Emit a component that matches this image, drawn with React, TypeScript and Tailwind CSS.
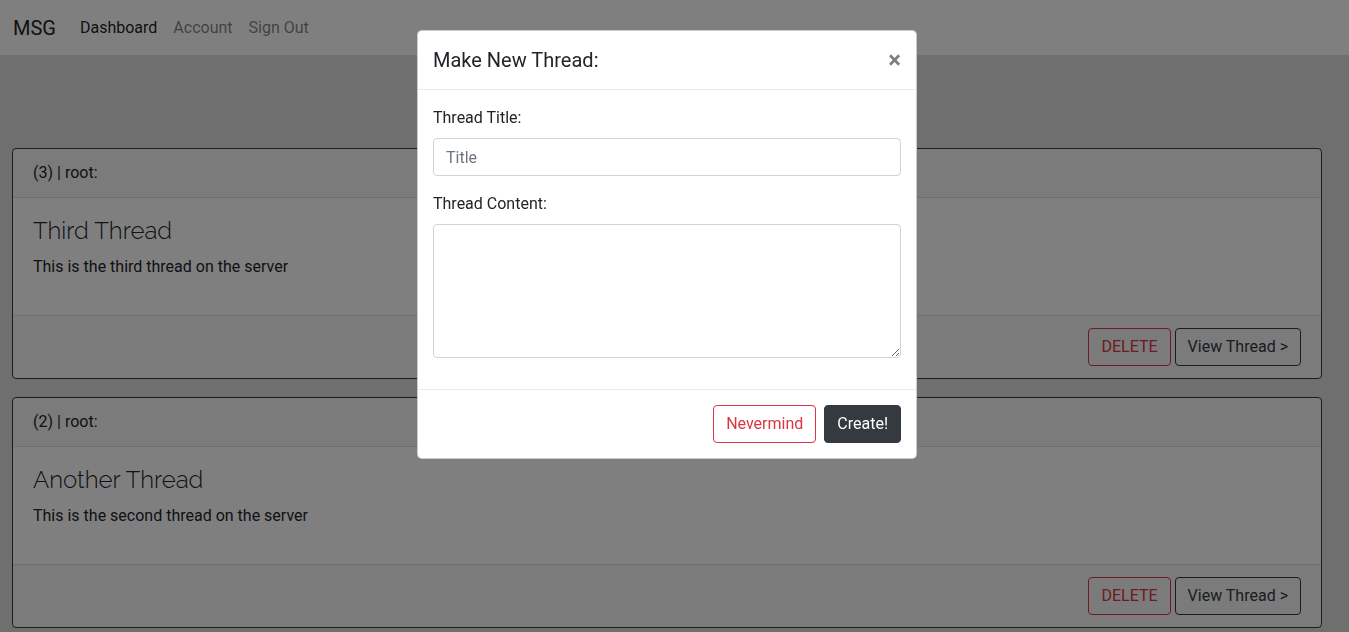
import React from 'react';

const threads = [
  { id: 3, author: 'root', title: 'Third Thread', content: 'This is the third thread on the server' },
  { id: 2, author: 'root', title: 'Another Thread', content: 'This is the second thread on the server' },
];

const btn = 'rounded-[4px] border px-3 py-[6px] text-base leading-6';

function ThreadCard({ thread }: { thread: (typeof threads)[number] }) {
  return (
    <div className="mb-[18px] rounded-[4px] border border-[#343a40] bg-white">
      <div className="border-b border-[#dcdcdc] bg-black/[0.03] px-5 py-3 leading-6">
        ({thread.id}) | {thread.author}:
      </div>
      <div className="px-5 pt-[19px] pb-5">
        <h4 className="mb-[9px] font-['Raleway','Lato',sans-serif] text-2xl leading-[1.2] font-light">
          {thread.title}
        </h4>
        <p className="mb-4 leading-6">{thread.content}</p>
      </div>
      <div className="flex justify-end gap-1 border-t border-[#dcdcdc] bg-black/[0.03] px-5 py-3">
        <button className={`${btn} border-[#dc3545] text-[#dc3545]`}>DELETE</button>
        <button className={`${btn} border-[#343a40] text-[#343a40]`}>View Thread &gt;</button>
      </div>
    </div>
  );
}

export default function App() {
  return (
    <div className="min-h-screen bg-[#dedede] font-['Roboto',sans-serif] text-base text-[#212529]">
      {/* Navbar */}
      <nav className="flex h-[55px] items-center bg-white px-[13px]">
        <span className="mr-6 text-xl leading-[30px]">MSG</span>
        <div className="flex gap-4 leading-6">
          <a className="text-black/90">Dashboard</a>
          <a className="text-black/50">Account</a>
          <a className="text-black/50">Sign Out</a>
        </div>
      </nav>

      <div className="pt-[93px] pr-[27px] pl-3">
        {threads.map((t) => (
          <ThreadCard key={t.id} thread={t} />
        ))}
      </div>

      {/* Modal */}
      <div className="fixed inset-0 bg-black/50">
        <div className="mt-[30px] flex w-[1334px] justify-center">
          <div className="w-[500px] rounded-[5px] border border-black/20 bg-white">
            <div className="flex items-center justify-between border-b border-[#e9ecef] px-[15px] py-[14px]">
              <h5 className="text-xl leading-[30px]">Make New Thread:</h5>
              <button className="text-2xl leading-none font-bold text-black/50">×</button>
            </div>
            <div className="px-[15px] pt-4 pb-[15px]">
              <label className="mb-2 block leading-6">Thread Title:</label>
              <input
                placeholder="Title"
                className="mb-4 block h-[38px] w-full rounded-[4px] border border-[#ced4da] px-3 placeholder:text-[#6c757d]"
              />
              <label className="mb-2 block leading-6">Thread Content:</label>
              <textarea className="mb-4 block h-[134px] w-full rounded-[4px] border border-[#ced4da] px-3 py-[6px]" />
            </div>
            <div className="flex justify-end gap-2 border-t border-[#e9ecef] px-[15px] py-[15px]">
              <button className={`${btn} border-[#dc3545] text-[#dc3545]`}>Nevermind</button>
              <button className={`${btn} border-[#343a40] bg-[#343a40] text-white`}>Create!</button>
            </div>
          </div>
        </div>
      </div>
    </div>
  );
}
